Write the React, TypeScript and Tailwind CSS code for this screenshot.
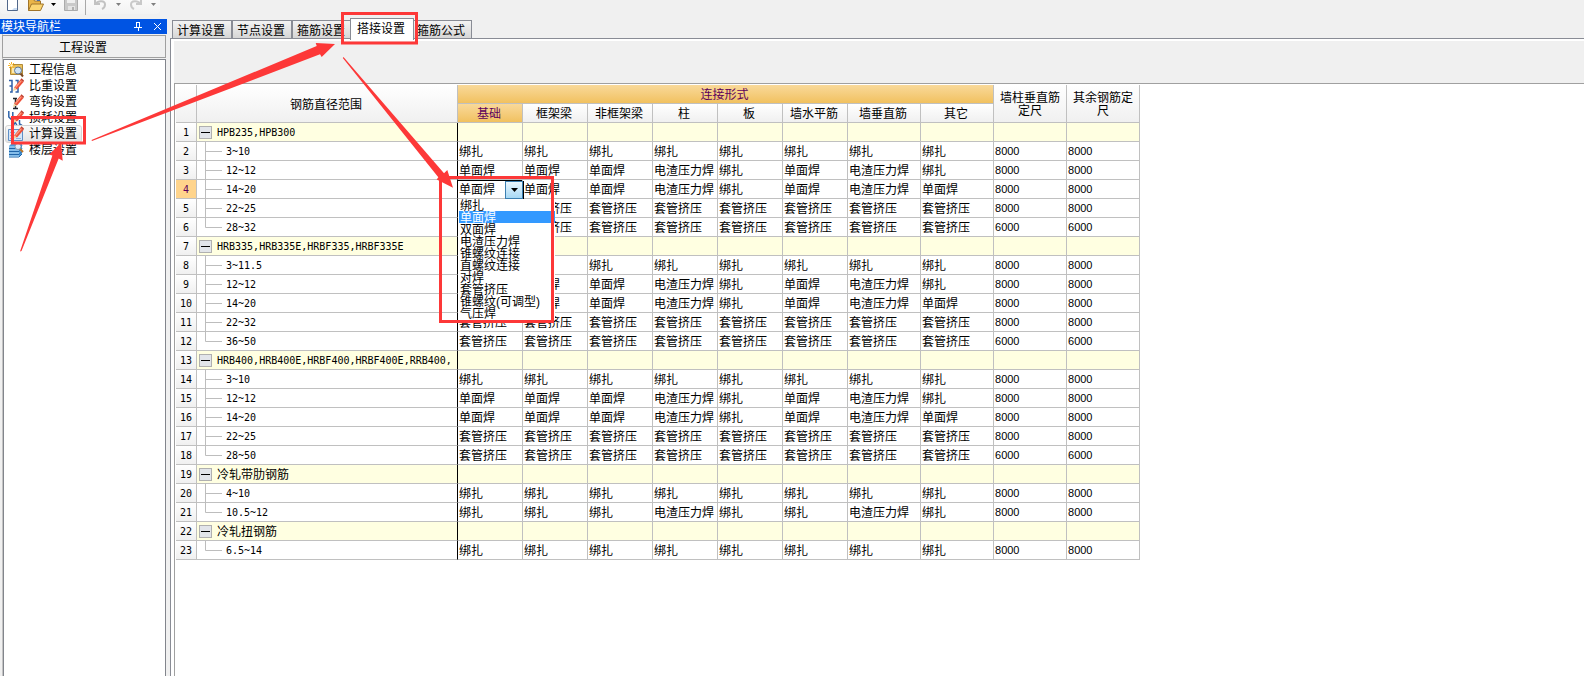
import React, { useState } from 'react';

const B = '绑扎';
const D = '单面焊';
const Z = '电渣压力焊';
const T = '套管挤压';

type Row = {
  label: string;
  group?: boolean;
  last?: boolean;
  cells?: string[];
  length?: string;
};

const group = (label: string): Row => ({ label, group: true });

const row = (label: string, cells: string[], length = '8000', last = false): Row => ({
  label,
  cells,
  length,
  last,
});

const allTied = [B, B, B, B, B, B, B, B];
const welded = [D, D, D, Z, B, D, Z, B];
const weldedOther = [D, D, D, Z, B, D, Z, D];
const sleeves = [T, T, T, T, T, T, T, T];

const rows: Row[] = [
  group('HPB235,HPB300'),
  row('3~10', allTied),
  row('12~12', welded),
  row('14~20', weldedOther),
  row('22~25', sleeves),
  row('28~32', sleeves, '6000', true),
  group('HRB335,HRB335E,HRBF335,HRBF335E'),
  row('3~11.5', allTied),
  row('12~12', welded),
  row('14~20', weldedOther),
  row('22~32', sleeves),
  row('36~50', sleeves, '6000', true),
  group('HRB400,HRB400E,HRBF400,HRBF400E,RRB400,'),
  row('3~10', allTied),
  row('12~12', welded),
  row('14~20', weldedOther),
  row('22~25', sleeves),
  row('28~50', sleeves, '6000', true),
  group('冷轧带肋钢筋'),
  row('4~10', allTied),
  row('10.5~12', [B, B, B, Z, B, B, Z, B], '8000', true),
  group('冷轧扭钢筋'),
  row('6.5~14', allTied, '8000', true),
];

const columns = ['基础', '框架梁', '非框架梁', '柱', '板', '墙水平筋', '墙垂直筋', '其它'];
const options = [B, D, '双面焊', Z, '锥螺纹连接', '直螺纹连接', '对焊', T, '锥螺纹(可调型)', '气压焊'];
const tabs = ['计算设置', '节点设置', '箍筋设置', '搭接设置', '箍筋公式'];
const navItems = ['工程信息', '比重设置', '弯钩设置', '损耗设置', '计算设置', '楼层设置'];

const ACTIVE_ROW = 3;

const Pencil = () => (
  <g>
    <path d="M6 9.500 12.500 1.500l3 2.500L9 11.500z" fill="#ee4f38" />
    <path d="M7.500 9.500 13.200 2.800" stroke="#ff9c80" strokeWidth="1.2" />
    <path d="m12.500 1.500 1-1.300 2.500 2.200-.5 1.600z" fill="#c0402f" />
    <path d="M6 9.500 9 11.500 5 13z" fill="#f2d3a0" />
  </g>
);

const NavIcon = ({ index }: { index: number }) => (
  <svg width="16" height="16" viewBox="0 0 16 16" fill="none" aria-hidden="true" className="shrink-0">
    {index === 0 && (
      <g>
        <path d="M2.500 2.500h12v10h-12z" fill="#ecc25c" stroke="#b08a38" />
        <path d="M4 6h9v5H4z" fill="#fbe9b0" />
        <path d="M3.500 0v7M0 3.500h7M1 1l5 5M6 1 1 6" stroke="#f8b52c" />
        <circle cx="3.500" cy="3.500" r="1.200" fill="#fff6cf" />
        <circle cx="10" cy="8.500" r="3.500" fill="#cfe4f6" stroke="#5f7796" />
        <path d="m12.500 11.500 2.500 3" stroke="#7c4a22" strokeWidth="2" />
      </g>
    )}
    {index === 1 && (
      <g>
        <path d="M1 2.500h3v11.500H2M4 8H1.500M7.500 2.500H10v11.500H7.500M10 8H8" stroke="#2f5fa8" strokeWidth="1.500" />
        <Pencil />
      </g>
    )}
    {index === 2 && (
      <g>
        <path d="M5 4.500h4M7.500 5v10M5 14.500h5" stroke="#20242c" strokeWidth="1.500" />
        <Pencil />
      </g>
    )}
    {index === 3 && (
      <g>
        <path d="M.8 1v6l2 2 2-2V2M5 7l2 2M5.500 15.500 7 12l2 3.500M11.500 10v4l2.500 1.500" stroke="#2f64ab" strokeWidth="1.500" />
        <Pencil />
      </g>
    )}
    {index === 4 && (
      <g>
        <path d="M.5 3.500h14v11H.5z" fill="#d5e6f8" stroke="#5f8fc6" />
        <path d="M2 6.500h5M2 9.500h4M2 12.500h4M8 12.500h5" stroke="#8fb4dd" />
        <Pencil />
      </g>
    )}
    {index === 5 && (
      <g>
        <path d="m1 4 3-3h10v11l-3 3H1z" fill="#4c9bdc" />
        <path d="M1 6.500h10l3-3M1 9.500h10l3-3M1 12.500h10l3-3M1 15h10l3-3" stroke="#1f64a8" />
        <path d="M1 5h10M1 8h10M1 11h10M1 14h10" stroke="#bfe0f8" />
        <circle cx="10" cy="4.500" r="3" fill="#dcebf8" stroke="#8596ab" />
        <path d="m12 7 3 3" stroke="#b9772c" strokeWidth="2" />
      </g>
    )}
  </svg>
);

const DropArrow = ({ muted = false }: { muted?: boolean }) => (
  <svg width="5" height="3" viewBox="0 0 5 3" aria-hidden="true">
    <path d="M0 0h5L2.500 3z" fill={muted ? '#808080' : '#000'} />
  </svg>
);

const Toolbar = () => (
  <div className="h-[19px] overflow-hidden bg-[#f0f0f0]">
    <div className="flex h-[14px] w-40 items-end rounded-b-sm bg-gradient-to-b from-[#fafafa] to-[#f3f3f3] pb-[3px]">
      <button type="button" aria-label="新建" className="ml-[6px]">
        <svg width="13" height="11" viewBox="0 0 13 11" className="block">
          <path d="M1.500-3v13.500h10V-3" fill="#fff" stroke="#51678a" />
          <path d="M8 8h3v2H6z" fill="#c9dcf2" />
        </svg>
      </button>
      <button type="button" aria-label="打开" className="ml-2">
        <svg width="17" height="11" viewBox="0 0 17 11" className="block">
          <path d="M1.500 10.500V-1h5l1 2h6v3" fill="#e9b548" stroke="#a0742a" />
          <path d="m1.500 10.500 3-6.500h12l-3 6.500z" fill="#fbd672" stroke="#a0742a" />
          <path d="M10 0h3" stroke="#4a6da3" strokeWidth="2" />
        </svg>
      </button>
      <button type="button" aria-label="打开选项" className="mb-[5px] ml-[7px]">
        <DropArrow />
      </button>
      <button type="button" aria-label="保存" className="ml-2">
        <svg width="15" height="11" viewBox="0 0 15 11" className="block">
          <path d="M.5-2v12.500h13V-2" fill="#c9c9c9" stroke="#ababab" />
          <path d="M3 0h8v3H3z" fill="#efefef" />
          <path d="M4 6h7v4H4z" fill="#e4e4e4" />
          <path d="M8 7h2v3H8z" fill="#b0b0b0" />
        </svg>
      </button>
      <span className="-mb-1 ml-[6px] h-4 w-px shrink-0 bg-[#a9a9a9]" />
      <button type="button" aria-label="撤销" className="ml-2">
        <svg width="13" height="11" viewBox="0 0 13 11" className="block">
          <path d="M1 0v4h5M2 3.500c2-3 9-3.500 9 1 0 2-1 3.500-3 4.500" fill="none" stroke="#c2c2c2" strokeWidth="2" />
        </svg>
      </button>
      <button type="button" aria-label="撤销选项" className="mb-[5px] ml-[9px]">
        <DropArrow muted />
      </button>
      <button type="button" aria-label="恢复" className="ml-2">
        <svg width="13" height="11" viewBox="0 0 13 11" className="block">
          <path d="M12 0v4H7M11 3.500C9 .5 2 0 2 4.500 2 6.500 3 8 5 9" fill="none" stroke="#c9c9c9" strokeWidth="2" />
        </svg>
      </button>
      <button type="button" aria-label="恢复选项" className="mb-[5px] ml-[9px]">
        <DropArrow muted />
      </button>
    </div>
  </div>
);

const Sidebar = () => {
  const [current, setCurrent] = useState(4);

  return (
    <aside className="flex w-[167px] shrink-0 flex-col">
      <div className="flex h-[15px] items-center bg-[#0054e3] pl-px text-white">
        <span className="flex-1">模块导航栏</span>
        <button type="button" aria-label="固定" className="mr-[11px]">
          <svg width="8" height="9" viewBox="0 0 8 9" fill="none" shapeRendering="crispEdges" className="block">
            <path d="M2.500 5V.5h3V5M5 .5V5M0 5.500h8M4 6v3" stroke="#fff" />
          </svg>
        </button>
        <button type="button" aria-label="关闭" className="mr-[5px]">
          <svg width="9" height="9" viewBox="0 0 9 9" fill="none" className="block">
            <path d="m1 1 7 7M8 1 1 8" stroke="#fff" />
          </svg>
        </button>
      </div>
      <div className="mr-px ml-0.5 flex flex-1 flex-col border-l border-[#c4c4c4] pt-px">
        <button type="button" className="-ml-px h-[23px] border border-[#a0a0a0] bg-[#f0f0f0] pt-0.5 pr-0.5 text-center">
          工程设置
        </button>
        <nav className="mt-px flex-1 border border-b-0 border-[#82858c] bg-white pt-0.5">
          <ul>
            {navItems.map((item, i) => (
              <li key={item} className="flex h-4 items-center pl-[2px]">
                <button
                  type="button"
                  onClick={() => setCurrent(i)}
                  className={`flex h-4 items-center gap-[5px] rounded-xs pr-1 pl-[2px] ${
                    current === i ? 'bg-gradient-to-b from-[#fafafa] to-[#e2e2e2] outline outline-[#d4d4d4]' : ''
                  }`}
                >
                  <NavIcon index={i} />
                  <span>{item}</span>
                </button>
              </li>
            ))}
          </ul>
        </nav>
      </div>
    </aside>
  );
};

const TreeCell = ({ item }: { item: Row }) => {
  if (item.group) {
    return (
      <div className="flex h-[18px] items-center overflow-hidden whitespace-nowrap">
        <button
          type="button"
          aria-label="折叠"
          className="ml-[2px] flex size-[13px] shrink-0 items-center justify-center border border-[#b0b0b0] bg-[#e2e5ea]"
        >
          <span className="h-px w-[9px] bg-black" />
        </button>
        <span className="ml-[5px] pt-0.5">{item.label}</span>
      </div>
    );
  }
  return (
    <div className="flex h-[18px] items-center">
      <svg width="18" height="19" viewBox="0 0 18 19" fill="none" className="-mb-px ml-2 shrink-0">
        <path d={item.last ? 'M.5 0v9.500H17' : 'M.5 0v19M.5 9.500H17'} stroke="#bdbdbd" />
      </svg>
      <span className="ml-[3px] pt-0.5">{item.label}</span>
    </div>
  );
};

const JointSelect = () => {
  const [value, setValue] = useState(D);

  return (
    <div className="relative h-[18px]">
      <select
        aria-label="连接形式"
        value={value}
        onChange={(e) => setValue(e.target.value)}
        className="block h-[18px] w-full appearance-none border-t border-black bg-white pl-px leading-4 outline-none"
      >
        {options.map((option) => (
          <option key={option}>{option}</option>
        ))}
      </select>
      <span className="pointer-events-none absolute top-px -right-px flex h-[18px] w-[18px] items-center justify-center border border-[#3c7fb1] bg-gradient-to-b from-[#eaf6fd] to-[#a7d9f5] shadow-[1px_0_0_0_#000]">
        <svg width="7" height="4" viewBox="0 0 7 4" aria-hidden="true">
          <path d="M0 0h7L3.500 4z" fill="#000" />
        </svg>
      </span>
      <ul role="listbox" aria-label="连接形式" className="absolute top-[19px] left-0 z-10 w-[97px] bg-white pb-px text-left">
        {options.map((option) => (
          <li
            key={option}
            role="option"
            aria-selected={option === value}
            onClick={() => setValue(option)}
            className={`ml-px h-3 pt-px pl-px leading-3 whitespace-nowrap ${
              option === value ? 'bg-[#3399ff] text-white' : ''
            }`}
          >
            {option}
          </li>
        ))}
      </ul>
    </div>
  );
};

const HEAD = 'border-r border-b border-[#c0c0c0] p-0 pt-0.5 font-normal';
const CELL = 'border-r border-b border-[#c0c0c0] p-0';
const PLAIN = 'bg-gradient-to-b from-white to-[#f0f0f0]';
const GOLD = 'bg-gradient-to-b from-[#f9d999] to-[#f1c15f] text-[#5c005c]';

const SettingsTable = () => (
  <table className="w-0 table-fixed border-separate border-spacing-0">
    <colgroup>
      <col className="w-[21px]" />
      <col className="w-[261px]" />
      {columns.map((name, i) => (
        <col key={name} className={i < 6 ? 'w-[65px]' : 'w-[73px]'} />
      ))}
      <col className="w-[73px]" />
      <col className="w-[73px]" />
    </colgroup>
    <thead>
      <tr className="h-[19px]">
        <th rowSpan={2} aria-label="序号" className={`${HEAD} ${PLAIN}`} />
        <th rowSpan={2} className={`${HEAD} ${PLAIN}`}>
          <div className="pr-0.5">钢筋直径范围</div>
        </th>
        <th colSpan={8} className={`${HEAD} ${GOLD}`}>
          <div className="pr-0.5">连接形式</div>
        </th>
        <th rowSpan={2} className={`${HEAD} ${PLAIN} leading-[13px]`}>
          <div className="px-1">墙柱垂直筋定尺</div>
        </th>
        <th rowSpan={2} className={`${HEAD} ${PLAIN} leading-[13px]`}>
          <div className="px-1">其余钢筋定尺</div>
        </th>
      </tr>
      <tr className="h-[19px]">
        {columns.map((name, i) => (
          <th key={name} className={`${HEAD} ${i === 0 ? GOLD : PLAIN}`}>
            <div className="pr-0.5">{name}</div>
          </th>
        ))}
      </tr>
    </thead>
    <tbody>
      {rows.map((item, r) => (
        <tr key={r} className={`h-[19px] ${item.group ? 'bg-[#ffffe1]' : 'bg-white'}`}>
          <th
            scope="row"
            className={`${HEAD} font-["DejaVu_Sans_Mono","Noto_Sans_CJK_SC",monospace] text-[10px] ${
              r === ACTIVE_ROW ? 'bg-[#ffd48c] text-[#5c005c]' : PLAIN
            }`}
          >
            {r + 1}
          </th>
          <td className="border-r border-b border-r-black border-b-[#c0c0c0] p-0">
            <div
              className={
                /^[\x00-\x7f]+$/.test(item.label)
                  ? 'font-["DejaVu_Sans_Mono","Noto_Sans_CJK_SC",monospace] text-[10px]'
                  : ''
              }
            >
              <TreeCell item={item} />
            </div>
          </td>
          {columns.map((name, c) => (
            <td key={name} className={`${CELL} whitespace-nowrap`}>
              {r === ACTIVE_ROW && c === 0 ? (
                <JointSelect />
              ) : (
                <div className="pt-0.5 pl-px">{item.cells?.[c]}</div>
              )}
            </td>
          ))}
          <td className={`${CELL} text-[11px]`}>
            <div className="pl-px">{item.length}</div>
          </td>
          <td className={`${CELL} text-[11px]`}>
            <div className="pl-px">{item.length}</div>
          </td>
        </tr>
      ))}
    </tbody>
  </table>
);

// Red frames and arrows laid over the window
const Annotations = () => (
  <svg
    width="560"
    height="340"
    viewBox="0 0 560 340"
    fill="none"
    aria-hidden="true"
    className="pointer-events-none absolute top-0 left-0 z-20"
  >
    <g stroke="#fd3838" strokeWidth="3">
      <path d="M342.500 13.500h74v29.500h-74z" />
      <path d="M12.500 117.500h72v25.500h-72z" />
      <path d="M440.500 177.500h112v144h-112z" />
    </g>
    <g fill="#fd3838">
      <path d="M20 251.500 52.400 155.500 49 154.500 61 143 62.700 160.700 58.700 158.500 21.500 251z" />
      <path d="M91.500 140 316.700 46 315.700 43 335 44 321.700 57 320 54.300 92 141z" />
      <path d="M343.500 57 444 173.300 447.300 170 453 187.700 436.700 179.500 438.300 177.300 342.800 58z" />
    </g>
  </svg>
);

const App = () => {
  const [activeTab, setActiveTab] = useState(3);

  return (
    <div className='relative flex min-h-screen flex-col overflow-hidden bg-[#f0f0f0] font-["Liberation_Sans","Noto_Sans_CJK_SC",sans-serif] text-xs leading-[14px] text-black'>
      <Toolbar />
      <div className="flex flex-1">
        <Sidebar />
        <main className="ml-[3px] flex min-w-0 flex-1 flex-col">
          <div role="tablist" className="flex h-[19px] items-end pl-0.5">
            {tabs.map((tab, i) => (
              <button
                key={tab}
                type="button"
                role="tab"
                aria-selected={activeTab === i}
                onClick={() => setActiveTab(i)}
                className={
                  activeTab === i
                    ? 'z-10 -mx-0.5 -mb-0.5 h-[22px] border border-b-0 border-[#898c95] bg-white pr-2 pb-0.5 pl-[6px]'
                    : 'h-[18px] border border-b-0 border-[#898c95] bg-gradient-to-b from-[#f3f3f3] to-[#d6d6d6] pt-0.5 pr-[6px] pl-1'
                }
              >
                {tab}
              </button>
            ))}
          </div>
          <div className="flex flex-1 flex-col border-t border-l border-[#898c95] bg-white pt-0.5 pl-[3px]">
            <div className="h-[42px] bg-[#f0f0f0]" />
            <div className="flex-1 border-t border-l border-[#a0a0a0] pt-px pl-px">
              <SettingsTable />
            </div>
          </div>
        </main>
      </div>
      <Annotations />
    </div>
  );
};

export default App;
